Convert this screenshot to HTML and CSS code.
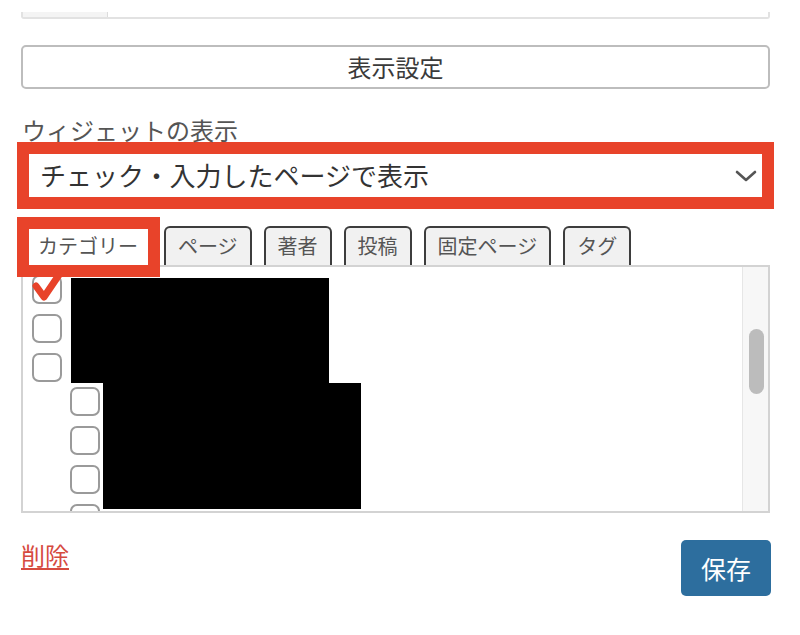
FILE: index.html
```html
<!DOCTYPE html>
<html lang="ja">
<head>
<meta charset="utf-8">
<title>ウィジェット設定</title>
<link rel="stylesheet" href="styles.css">
</head>
<body>
<div class="page">
  <div class="top-field"><div class="addon"></div><div class="field"></div></div>
  <button class="btn-settings">表示設定</button>
  <div class="label">ウィジェットの表示</div>
  <div class="select-mark">
    <div class="select">
      <span class="select-text">チェック・入力したページで表示</span>
      <svg class="chevron" width="22" height="14" viewBox="0 0 22 14"><path d="M2 3 L11 11 L20 3" fill="none" stroke="#555" stroke-width="2.6" stroke-linecap="round" stroke-linejoin="round"/></svg>
    </div>
  </div>
  <div class="tabs">
    <div class="tab active">カテゴリー</div>
    <div class="tab">ページ</div>
    <div class="tab">著者</div>
    <div class="tab">投稿</div>
    <div class="tab">固定ページ</div>
    <div class="tab">タグ</div>
    <div class="tab-mark"></div>
  </div>
  <div class="panel">
    <div class="list">
      <div class="row"><span class="cb"></span></div>
      <div class="row"><span class="cb"></span></div>
      <div class="row"><span class="cb"></span></div>
      <div class="row child first-child"><span class="cb"></span></div>
      <div class="row child"><span class="cb"></span></div>
      <div class="row child"><span class="cb"></span></div>
      <div class="row child"><span class="cb"></span></div>
      <div class="redact r1"></div>
      <div class="redact r2"></div>
      <svg class="check" width="40" height="40" viewBox="0 0 40 40"><path d="M6 21 L14 32 L33 4" fill="none" stroke="#e8432a" stroke-width="7" stroke-linecap="round" stroke-linejoin="round"/></svg>
    </div>
    <div class="scroll"><div class="thumb"></div></div>
  </div>
  <div class="actions">
    <a class="delete" href="#">削除</a>
    <button class="save">保存</button>
  </div>
</div>
</body>
</html>
```

FILE: styles.css
```css
* { box-sizing: border-box; }
html, body { margin: 0; padding: 0; background: #fff; }
body {
  font-family: "Noto Sans CJK JP", "Noto Sans", sans-serif;
  color: #333;
}
.page {
  width: 800px;
  padding: 0 30px 0 21px;
}
.top-field {
  display: flex;
  height: 7px;
  margin-top: 12px;
  border: 2px solid #e2e2e2;
  border-top: none;
  border-radius: 0 0 3px 3px;
}
.addon {
  width: 85px;
  background: #f4f4f4;
  border-right: 1px solid #dcdcdc;
}
.field { flex: 1; }
.btn-settings {
  display: block;
  width: 100%;
  height: 44px;
  margin-top: 26px;
  border: 2px solid #bdbdbd;
  border-radius: 5px;
  background: #fff;
  font-family: inherit;
  font-size: 24px;
  line-height: 40px;
  color: #3a3a3a;
  padding: 0;
}
.label {
  margin-top: 28px;
  font-size: 24px;
  line-height: 25px;
  color: #555;
  padding-left: 1px;
}
.select-mark {
  margin: 0 -4px;
  border: 12px solid #e8432a;
  height: 67px;
}
.select {
  display: flex;
  align-items: center;
  justify-content: space-between;
  height: 100%;
  padding: 0 5px 0 11px;
  background: #fff;
}
.select-text {
  font-size: 26px;
  line-height: 30px;
  color: #333;
  margin-top: -2px;
}
.tabs {
  position: relative;
  display: flex;
  gap: 12px;
  margin-top: 17px;
  padding-left: 3px;
  height: 39px;
}
.tab {
  height: 39px;
  padding: 0 12px;
  border: 2px solid #3d3d3d;
  border-bottom: none;
  border-radius: 6px 6px 0 0;
  background: #f1f1f1;
  font-size: 20px;
  line-height: 36px;
  color: #555;
}
.tab.active {
  background: #fff;
  border-color: #fff;
}
.tab-mark {
  position: absolute;
  left: -4px;
  top: -9px;
  width: 143px;
  height: 60px;
  border: 12px solid #e8432a;
  z-index: 2;
}
.panel {
  display: flex;
  height: 248px;
  border: 2px solid #d3d3d3;
}
.list {
  position: relative;
  flex: 1;
  overflow: hidden;
  display: flex;
  flex-direction: column;
  gap: 10px;
  padding: 8px 0 0 9px;
}
.row { display: flex; align-items: center; height: 29px; flex: none; }
.row.child { padding-left: 38px; }
.row.first-child { margin-top: -5px; }
.cb {
  width: 30px;
  height: 29px;
  border: 2px solid #9a9a9a;
  border-radius: 7px;
  background: #fff;
}
.redact {
  position: absolute;
  background: #000;
}
.r1 { left: 48px; top: 11px; width: 258px; height: 105px; }
.r2 { left: 80px; top: 116px; width: 258px; height: 126px; }
.check {
  position: absolute;
  left: 7px;
  top: -2px;
  overflow: visible;
  z-index: 3;
}
.scroll {
  width: 26px;
  background: #f7f7f7;
  border-left: 1px solid #e6e6e6;
  padding: 62px 0 0 6px;
}
.thumb {
  width: 15px;
  height: 65px;
  border-radius: 8px;
  background: #bcbcbc;
}
.actions {
  display: flex;
  justify-content: space-between;
  align-items: flex-start;
  margin-top: 27px;
}
.delete {
  margin-top: 1px;
  font-size: 24px;
  line-height: 28px;
  color: #d64a3f;
  text-decoration: underline;
  text-underline-offset: 3px;
  text-decoration-thickness: 2px;
}
.save {
  width: 90px;
  height: 56px;
  margin-right: -1px;
  border: none;
  border-radius: 5px;
  background: #2d6e9e;
  color: #fff;
  font-family: inherit;
  font-size: 25px;
  padding: 0;
}
```
